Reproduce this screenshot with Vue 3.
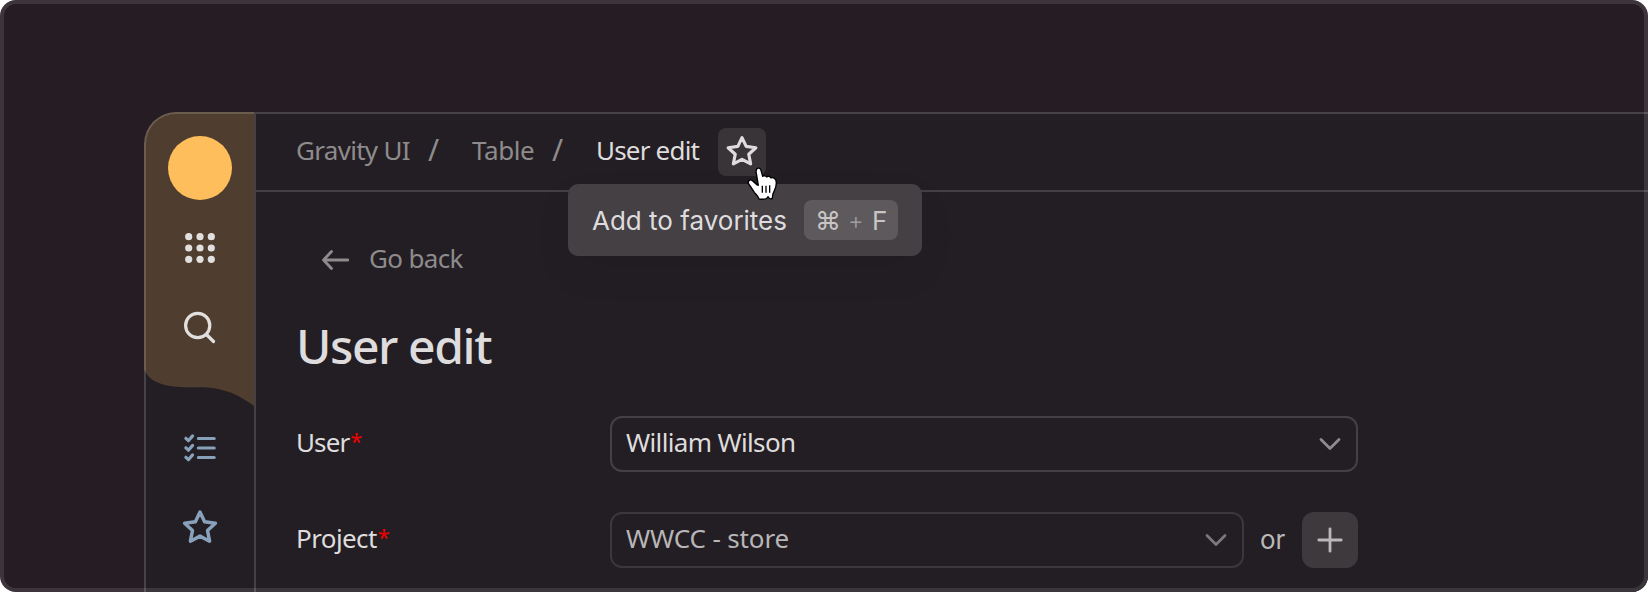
<script setup>
const STAR = 'M20 4 24.6 13.8 35.4 15.3 27.5 22.5 29.6 33.2 20 28.1 10.4 33.2 12.5 22.5 4.6 15.3 15.4 13.8Z'
const dots = [8.7, 20, 31.3]
const rows = [10.5, 20, 29.5]
</script>

<template>
  <div class="frame">
    <div class="app">
      <aside class="sidebar">
        <svg class="wave" width="112" height="298" viewBox="0 0 112 298">
          <path d="M0 0H110V294C94 282.500 80 275.300 54 275.300C30 275.300 8 275 0 257.500Z" fill="#4f3d2f" />
        </svg>
        <div class="avatar"></div>
        <svg class="icon grid-icon" viewBox="0 0 40 40" fill="#e2e0df">
          <template v-for="y in dots" :key="y">
            <circle v-for="x in dots" :key="x" :cx="x" :cy="y" r="3.6" />
          </template>
        </svg>
        <svg class="icon search-icon" viewBox="0 0 40 40" fill="none" stroke="#e2e0df" stroke-width="3.2" stroke-linecap="round">
          <circle cx="17.700" cy="17.500" r="12.100" />
          <path d="M27 27 33.500 33.500" />
        </svg>
        <svg class="icon list-icon" viewBox="0 0 40 40" fill="none" stroke="#88a1ba" stroke-width="3.2" stroke-linecap="round" stroke-linejoin="round">
          <path v-for="y in rows" :key="y" :d="`M5.900 ${y - 0.2}l2.500 2.400 4.200-4.800M18.400 ${y}h15.800`" />
        </svg>
        <svg class="icon" viewBox="0 0 40 40" fill="none" stroke="#88a1ba" stroke-width="3.5" stroke-linejoin="round">
          <path :d="STAR" />
        </svg>
      </aside>

      <main class="main">
        <header class="header">
          <span class="crumb c1">Gravity UI</span>
          <span class="slash s1">/</span>
          <span class="crumb c2">Table</span>
          <span class="slash s2">/</span>
          <span class="crumb current">User edit</span>
          <button class="fav">
            <svg width="36" height="36" viewBox="0 0 40 40" fill="none" stroke="#dedcdd" stroke-width="3.5" stroke-linejoin="round">
              <path :d="STAR" />
            </svg>
          </button>
          <div class="tooltip">
            <span class="tip-text">Add to favorites</span>
            <span class="keys"><span class="cmd">⌘</span><span class="plus">+</span><span class="key">F</span></span>
          </div>
          <svg class="cursor" width="34" height="40" viewBox="0 0 102 120">
            <path
              d="M29 9C33 4 40 6 42 13L47 31C50 28 57 29 59 33C63 29 70 31 72 36C77 33 86 37 87 44C89 53 86 66 82 74C78 81 76 88 76 97C70 101 65 96 63 92C59 101 50 101 36 99C34 90 28 86 22 79C17 71 11 62 5 54C1 47 8 39 15 43C21 47 25 51 29 56L34 58L27 16Z"
              fill="#fff" stroke="#000" stroke-width="4" stroke-linejoin="round"
            />
            <path d="M46 59V80M57 59V80M68 58V80" stroke="#000" stroke-width="4" />
          </svg>
        </header>

        <section class="content">
          <div class="back">
            <svg width="30" height="24" viewBox="0 0 30 24" fill="none" stroke="#8e8b8d" stroke-width="2.800" stroke-linecap="round" stroke-linejoin="round">
              <path d="M10.500 3.500 2.500 12l8 8.500M2.500 12H26.800" />
            </svg>
            <span class="back-text">Go back</span>
          </div>
          <h1 class="title">User edit</h1>
          <div class="row">
            <label class="label"><span class="l-user">User</span><span class="req">*</span></label>
            <div class="select">
              <span class="v1">William Wilson</span>
              <svg class="chev" width="24" height="14" viewBox="0 0 24 14" fill="none" stroke="#8e8b8d" stroke-width="2.800" stroke-linecap="round" stroke-linejoin="round">
                <path d="M3 2.500 12 11.500 21 2.500" />
              </svg>
            </div>
          </div>
          <div class="row second">
            <label class="label"><span class="l-project">Project</span><span class="req">*</span></label>
            <div class="select dim">
              <span class="v2">WWCC - store</span>
              <svg class="chev" width="24" height="14" viewBox="0 0 24 14" fill="none" stroke="#7b777a" stroke-width="2.800" stroke-linecap="round" stroke-linejoin="round">
                <path d="M3 2.500 12 11.500 21 2.500" />
              </svg>
            </div>
            <span class="or">or</span>
            <button class="add">
              <svg width="28" height="28" viewBox="0 0 28 28" stroke="#bab8b9" stroke-width="2.800" stroke-linecap="round">
                <path d="M14 2.800V25.200M2.800 14H25.200" />
              </svg>
            </button>
          </div>
        </section>
      </main>
    </div>
  </div>
</template>

<style>
body { margin: 0; background: #fff; }
</style>

<style scoped>
* { box-sizing: border-box; }
.frame {
  position: relative;
  width: 1648px;
  height: 592px;
  padding: 112px 0 0 144px;
  overflow: hidden;
  border-radius: 16px;
  background: #261c24;
  font: 26px/36px "Noto Sans", sans-serif;
  color: #dedcdd;
  white-space: nowrap;
}
.frame::after {
  content: "";
  position: absolute;
  inset: 0;
  border: 4px solid rgba(255, 255, 255, 0.11);
  border-radius: 16px;
  pointer-events: none;
}
.app {
  position: relative;
  display: flex;
  height: 480px;
  overflow: hidden;
  border-radius: 32px 0 0 0;
  background: #231e23;
}
.app::after {
  content: "";
  position: absolute;
  inset: 0;
  border: solid rgba(255, 255, 255, 0.16);
  border-width: 2px 0 0 2px;
  border-radius: 32px 0 0 0;
  pointer-events: none;
}
.sidebar {
  position: relative;
  flex: none;
  display: flex;
  flex-direction: column;
  align-items: center;
  width: 112px;
  padding-top: 24px;
}
.sidebar::after {
  content: "";
  position: absolute;
  top: 2px;
  right: 0;
  bottom: 0;
  width: 2px;
  background: #454044;
}
.wave { position: absolute; top: 0; left: 0; }
.avatar {
  position: relative;
  flex: none;
  width: 64px;
  height: 64px;
  border-radius: 50%;
  background: #ffbe5c;
}
.icon { position: relative; flex: none; width: 40px; height: 40px; }
.grid-icon { margin-top: 28px; }
.search-icon { margin-top: 40px; }
.list-icon { margin: 80px 0 40px; }
.main { flex: 1; }
.header {
  position: relative;
  display: flex;
  align-items: center;
  height: 80px;
  padding: 0 0 0 40px;
  border-bottom: 2px solid #454044;
  color: #8e8b8d;
}
.header > span { padding-bottom: 3px; }
.c1 { width: 132px; letter-spacing: -0.7px; }
.s1, .s2 { width: 44px; font-size: 30px; }
.c2 { width: 80px; letter-spacing: -0.4px; }
.current { width: 122px; color: #dedcdd; letter-spacing: -0.8px; }
.fav {
  display: flex;
  align-items: center;
  justify-content: center;
  width: 48px;
  height: 48px;
  margin-top: 2px;
  padding: 0 0 1px;
  border: 0;
  border-radius: 8px;
  background: #393438;
}
.tooltip {
  position: absolute;
  top: 72px;
  left: 312px;
  display: flex;
  align-items: center;
  justify-content: space-between;
  width: 354px;
  height: 72px;
  padding: 0 24px;
  border-radius: 10px;
  background: #454044;
  box-shadow: 0 16px 40px rgba(0, 0, 0, 0.06);
  color: #dedcdd;
  font-family: Inter, sans-serif;
}
.tip-text { padding-top: 2px; }
.keys {
  display: flex;
  align-items: center;
  width: 94px;
  height: 40px;
  padding: 1px 0 0 11px;
  border-radius: 8px;
  background: #5d595c;
  color: #c7c5c6;
}
.cmd { width: 33px; }
.plus { width: 24px; font-size: 24px; font-weight: 300; color: #a09da0; }
.cursor { position: absolute; top: 54px; left: 491px; }
.content { padding-left: 40px; }
.back {
  display: flex;
  align-items: center;
  height: 36px;
  margin-top: 50px;
  padding-left: 25px;
  color: #8e8b8d;
}
.back-text { margin: -4px 0 0 18px; letter-spacing: -0.65px; }
.title { height: 64px; margin: 36px 0 38px; font-size: 48px; line-height: 64px; font-weight: 500; letter-spacing: -1.4px; }
.row { display: flex; align-items: center; height: 56px; }
.second { margin-top: 40px; }
.label { display: flex; width: 314px; padding-bottom: 4px; }
.l-user { letter-spacing: -0.9px; }
.l-project { letter-spacing: -0.6px; }
.req { margin-left: 1px; color: #f00000; font-size: 22px; line-height: 33px; }
.select {
  display: flex;
  align-items: center;
  justify-content: space-between;
  width: 748px;
  height: 56px;
  padding: 0 14px;
  border: 2px solid #454044;
  border-radius: 12px;
}
.select span { padding-bottom: 4px; }
.v1 { letter-spacing: -0.65px; }
.v2 { letter-spacing: -0.15px; }
.dim { width: 634px; border-color: #3c373b; color: #b8b6b7; }
.or { width: 42px; margin-left: 16px; color: #bab8b9; font-family: Inter, sans-serif; }
.add {
  display: flex;
  align-items: center;
  justify-content: center;
  width: 56px;
  height: 56px;
  padding: 0;
  border: 0;
  border-radius: 12px;
  background: #3e393d;
}
</style>
